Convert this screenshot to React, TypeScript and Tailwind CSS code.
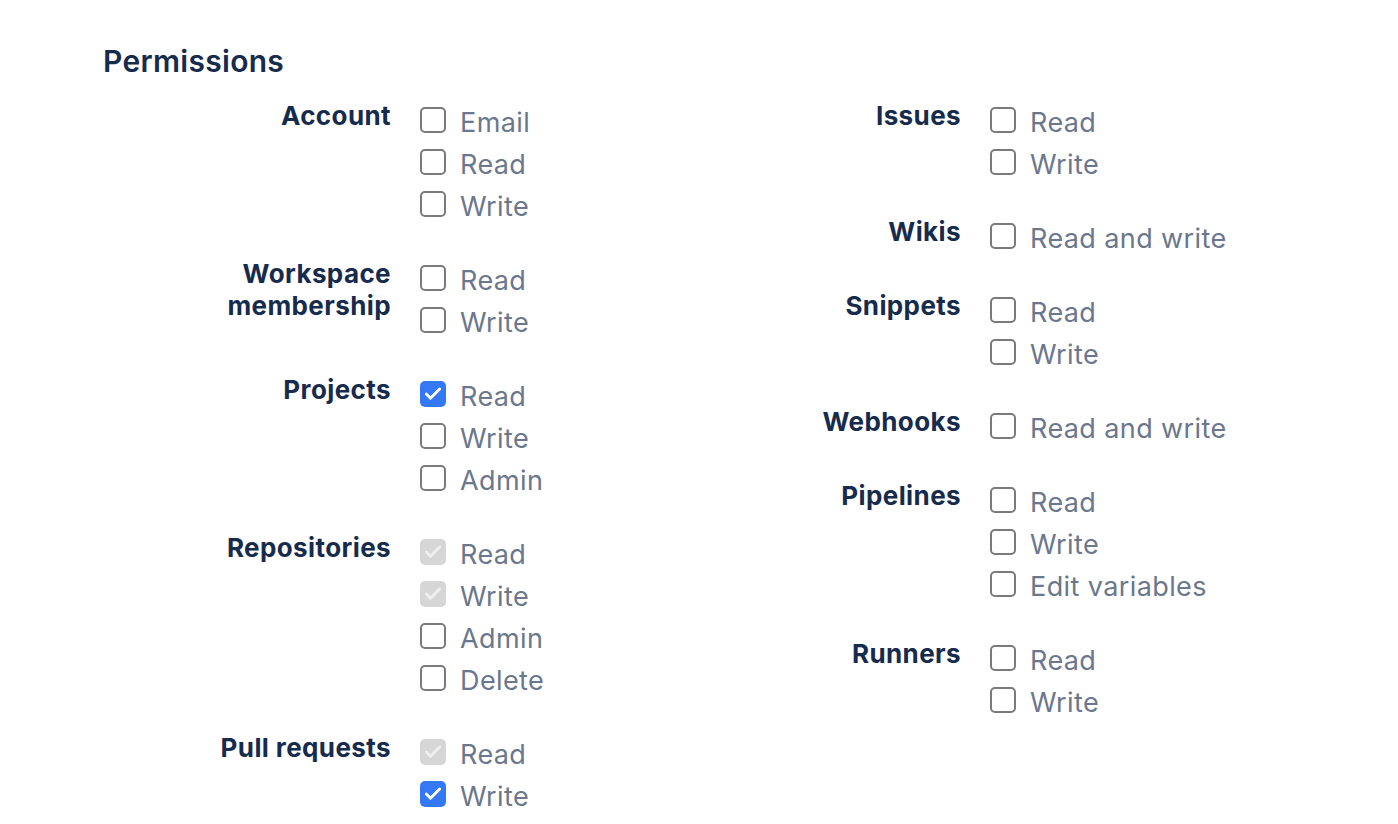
import { Check } from "lucide-react";

type State = "off" | "on" | "locked";

interface Group {
  label: string[];
  options: [string, State][];
}

const left: Group[] = [
  { label: ["Account"], options: [["Email", "off"], ["Read", "off"], ["Write", "off"]] },
  { label: ["Workspace", "membership"], options: [["Read", "off"], ["Write", "off"]] },
  { label: ["Projects"], options: [["Read", "on"], ["Write", "off"], ["Admin", "off"]] },
  {
    label: ["Repositories"],
    options: [["Read", "locked"], ["Write", "locked"], ["Admin", "off"], ["Delete", "off"]],
  },
  { label: ["Pull requests"], options: [["Read", "locked"], ["Write", "on"]] },
];

const right: Group[] = [
  { label: ["Issues"], options: [["Read", "off"], ["Write", "off"]] },
  { label: ["Wikis"], options: [["Read and write", "off"]] },
  { label: ["Snippets"], options: [["Read", "off"], ["Write", "off"]] },
  { label: ["Webhooks"], options: [["Read and write", "off"]] },
  { label: ["Pipelines"], options: [["Read", "off"], ["Write", "off"], ["Edit variables", "off"]] },
  { label: ["Runners"], options: [["Read", "off"], ["Write", "off"]] },
];

function Box({ state }: { state: State }) {
  if (state === "on") {
    return (
      <span className="w-[26px] h-[26px] rounded-[5px] bg-[#3478f6] flex items-center justify-center shrink-0">
        <Check size={20} strokeWidth={3.5} className="text-white" />
      </span>
    );
  }
  if (state === "locked") {
    return (
      <span className="w-[26px] h-[26px] rounded-[5px] bg-[#d6d6d6] flex items-center justify-center shrink-0">
        <Check size={20} strokeWidth={3.5} className="text-[#efefef]" />
      </span>
    );
  }
  return <span className="w-[26px] h-[26px] rounded-[5px] border-2 border-[#7a7a7a] bg-white shrink-0" />;
}

function Column({ groups }: { groups: Group[] }) {
  return (
    <div className="w-[570px] flex flex-col gap-[32px]">
      {groups.map((g) => (
        <div key={g.label.join(" ")} className="flex gap-[29px]">
          <div className="w-[288px] text-right text-[26px] leading-[32px] font-bold tracking-[0.4px] text-[#172b4d] pt-[1px]">
            {g.label.map((l) => (
              <div key={l}>{l}</div>
            ))}
          </div>
          <div className="flex flex-col">
            {g.options.map(([name, state]) => (
              <label key={name} className="h-[42px] flex items-center gap-[14px]">
                <Box state={state} />
                <span className="text-[27px] leading-[42px] tracking-[0.4px] text-[#6b778c] pt-[6px]">
                  {name}
                </span>
              </label>
            ))}
          </div>
        </div>
      ))}
    </div>
  );
}

export default function App() {
  return (
    <div
      className="min-h-screen bg-white pl-[103px] pt-[43px]"
      style={{ fontFamily: "Inter, 'Noto Sans', sans-serif" }}
    >
      <h1 className="text-[30px] leading-[36px] font-semibold tracking-[0.3px] text-[#172b4d]">Permissions</h1>
      <div className="flex mt-[20px]">
        <Column groups={left} />
        <Column groups={right} />
      </div>
    </div>
  );
}
